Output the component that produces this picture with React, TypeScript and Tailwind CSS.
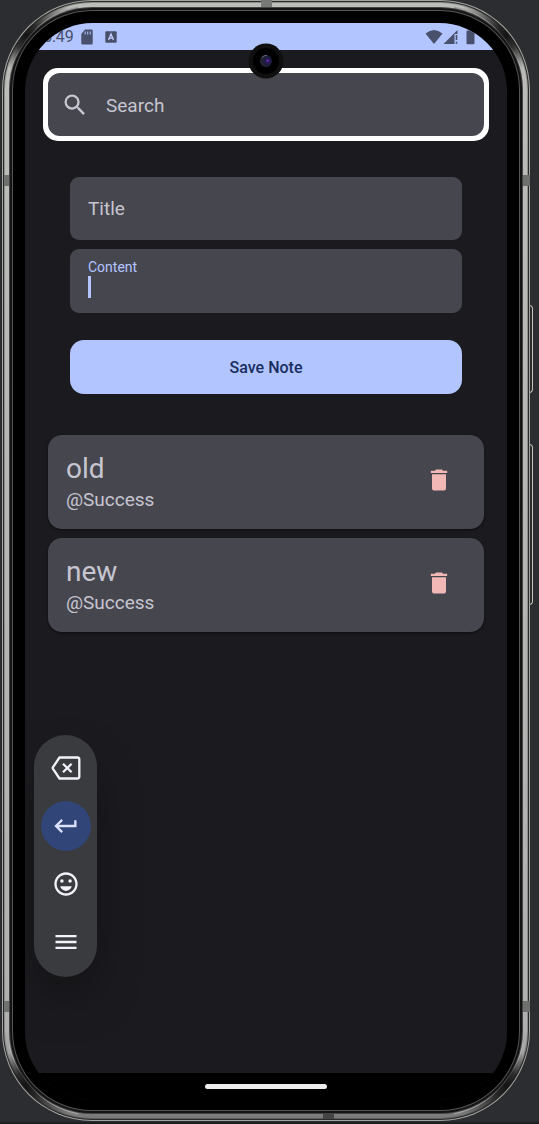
import { useState } from "react";
import {
  MdDelete,
  MdKeyboardReturn,
  MdMenu,
  MdOutlineEmojiEmotions,
  MdSearch,
} from "react-icons/md";

type Note = { id: number; title: string; content: string };

const initialNotes: Note[] = [
  { id: 1, title: "old", content: "@Success" },
  { id: 2, title: "new", content: "@Success" },
];

function CornerShade({ className }: { className: string }) {
  return (
    <svg className={className} width="92" height="92" viewBox="0 0 92 92" fill="none" aria-hidden="true">
      <path d="M7.400 67.900A85.500 85.500 0 0 1 67.900 7.400" stroke="url(#rim-shade)" strokeWidth="6" />
      <path d="M6.600 76A84.500 84.500 0 0 1 19 47.500Q12.500 62 9.500 76Z" fill="#b4b4b4" />
      <path d="M76 6.600A84.500 84.500 0 0 0 31 31.500Q48 16 76 9.500Z" fill="#a0a0a0" />
    </svg>
  );
}

function PhoneFrame() {
  return (
    <div aria-hidden="true">
      <svg className="absolute" width="0" height="0">
        <defs>
          <linearGradient id="rim-shade" gradientUnits="userSpaceOnUse" x1="7" y1="68" x2="68" y2="7">
            <stop offset="0" stopColor="#1a1a1a" stopOpacity="0" />
            <stop offset="0.25" stopColor="#1a1a1a" stopOpacity="0.85" />
            <stop offset="0.4" stopColor="#141414" />
            <stop offset="0.55" stopColor="#1a1a1a" stopOpacity="0.9" />
            <stop offset="0.75" stopColor="#1a1a1a" stopOpacity="0.5" />
            <stop offset="1" stopColor="#1a1a1a" stopOpacity="0" />
          </linearGradient>
        </defs>
      </svg>
      <span className="absolute top-[305px] -right-[3px] h-[88px] w-1 rounded-r-sm border border-[#c4c4bc] bg-[#2a2a2a]" />
      <span className="absolute top-[444px] -right-[3px] h-[161px] w-1 rounded-r-sm border border-[#c4c4bc] bg-[#2a2a2a]" />
      <span className="absolute inset-0 rounded-[90px] bg-[#a4a5a1]" />
      <span className="absolute inset-px rounded-[89px] bg-[#2a2a2a]" />
      <span className="absolute inset-0.5 rounded-[88px] bg-linear-to-b from-[#8f918d] from-0% via-[#8a8a8a] via-92% to-[#5c5c5c] to-100%" />
      <span className="absolute inset-[3px] rounded-[87px] bg-linear-to-b from-[#bcbeb9] from-0% via-[#b0b0b0] via-92% to-[#7a7a7a] to-100%" />
      <CornerShade className="absolute top-0 left-0" />
      <CornerShade className="absolute top-0 right-0 -scale-x-100" />
      <CornerShade className="absolute bottom-0 left-0 -scale-y-100" />
      <CornerShade className="absolute right-0 bottom-0 -scale-100" />
      <span className="absolute top-[175px] left-0.5 h-[11px] w-2 bg-[#6e716d]" />
      <span className="absolute top-[175px] right-0 h-[11px] w-2 bg-[#6e716d]" />
      <span className="absolute bottom-[109px] left-0.5 h-[11px] w-2 bg-[#6e716d]" />
      <span className="absolute right-0 bottom-[109px] h-[11px] w-2 bg-[#6e716d]" />
      <span className="absolute top-0 left-[259px] h-2 w-[11px] bg-[#777a76]" />
      <span className="absolute bottom-0.5 left-[321px] h-2 w-[11px] bg-[#444444]" />
      <span className="absolute inset-[7px] rounded-[83px] bg-[#444444]" />
      <span className="absolute inset-2 rounded-[82px] bg-[#141414]" />
      <span className="absolute inset-2.5 rounded-[80px] bg-[#555555]" />
      <span className="absolute inset-[11px] rounded-[79px] bg-black" />
    </div>
  );
}

function StatusBar() {
  return (
    <header className="flex h-[27px] items-center justify-between bg-[#b2c5ff] pr-8 pl-[18px] text-[#48506c]">
      <div className="flex items-center">
        <span className="w-[38px] text-base leading-none">5:49</span>
        <svg className="block" width="12" height="16" viewBox="0 0 12 16" aria-hidden="true">
          <path d="M4 0.5H10.5A1.2 1.2 0 0 1 11.7 1.7V14.3A1.2 1.2 0 0 1 10.5 15.5H1.5A1.2 1.2 0 0 1 .3 14.3V5Z" fill="currentColor" />
          <path d="M4.2 2.5v3M6.7 2.5v3M9.2 2.5v3" stroke="#b2c5ff" strokeWidth="1" />
        </svg>
        <svg className="ml-3 block" width="12" height="12" viewBox="0 0 12 12" aria-hidden="true">
          <rect x="0.3" y="0.3" width="11.4" height="11.4" rx="1" fill="currentColor" />
          <path d="M3.5 9 6 3 8.500 9M4.300 7.200H7.700" stroke="#c4d2ff" strokeWidth="1.300" fill="none" />
        </svg>
      </div>
      <div className="flex items-center">
        <svg className="block" width="18" height="16" viewBox="0 0 18 16" aria-hidden="true">
          <path d="M.5 4.500Q9-2.500 17.500 4.500L9 15Z" fill="currentColor" />
        </svg>
        <svg className="block" width="16" height="16" viewBox="0 0 16 16" aria-hidden="true">
          <path d="M.5 15 14.500 1V5H11.500V15Z" fill="currentColor" />
          <path d="M13.500 6v5M13.500 12.800v2" stroke="currentColor" strokeWidth="1.600" />
        </svg>
        <svg className="ml-[7px] block" width="9" height="16" viewBox="0 0 9 16" aria-hidden="true">
          <path d="M3 0H6V1.500H7.500A1 1 0 0 1 8.500 2.500V14.200A1 1 0 0 1 7.500 15.200H1.500A1 1 0 0 1 .5 14.200V2.500A1 1 0 0 1 1.500 1.500H3Z" fill="currentColor" />
        </svg>
      </div>
    </header>
  );
}

function Camera() {
  return (
    <svg className="absolute top-5 left-1/2 -translate-x-1/2" width="36" height="36" viewBox="0 0 36 36" aria-hidden="true">
      <defs>
        <radialGradient id="lens" cx="0.65" cy="0.5" r="0.6">
          <stop offset="0" stopColor="#4a1a80" />
          <stop offset="0.45" stopColor="#1c1a40" />
          <stop offset="1" stopColor="#23292e" />
        </radialGradient>
      </defs>
      <circle cx="18" cy="18" r="17.500" fill="#0f0f10" />
      <circle cx="18" cy="18" r="13" fill="#000000" />
      <circle cx="18" cy="18" r="6" fill="url(#lens)" />
      <circle cx="19.500" cy="17.500" r="0.8" fill="#8a3be0" />
      <path d="M14 14.500q2-2.500 5-2" stroke="#6d6a80" strokeWidth="1" fill="none" />
    </svg>
  );
}

function BackspaceIcon() {
  return (
    <svg width="30" height="28" viewBox="0 0 30 28" fill="none" stroke="currentColor" aria-hidden="true">
      <path
        d="M8.500 3.500H26.300A2 2 0 0 1 28.300 5.500V22.500A2 2 0 0 1 26.300 24.500H8.500L2 14.800Q1.500 14 2 13.200Z"
        strokeWidth="2.300"
        strokeLinejoin="round"
      />
      <path d="M12 9.700 20.600 18.300M20.600 9.700 12 18.300" strokeWidth="2.300" />
    </svg>
  );
}

function NoteCard({ note, onDelete }: { note: Note; onDelete: () => void }) {
  return (
    <li className="flex items-start justify-between rounded-[14px] bg-[#46464f] px-[18px] pt-[18px] pb-[15px] shadow-sm shadow-black/40">
      <div className="text-[#c6c5d0]">
        <h2 className="text-[28px] leading-8">{note.title}</h2>
        <p className="mt-px text-[19px] leading-7">{note.content}</p>
      </div>
      <button
        type="button"
        aria-label={`Delete ${note.title}`}
        onClick={onDelete}
        className="flex size-[54px] items-center justify-center text-[#f2b8b5]"
      >
        <MdDelete size={28} />
      </button>
    </li>
  );
}

function KeyToolbar() {
  const key = "flex size-[50px] items-center justify-center rounded-full text-[#f3f2fa]";
  return (
    <div className="absolute bottom-[123px] left-[9px] flex w-[63px] flex-col items-center gap-2 rounded-full bg-[#3a3b3f] pt-2 pb-2.5 shadow-2xl shadow-black/50">
      <button type="button" aria-label="Backspace" className={key}>
        <BackspaceIcon />
      </button>
      <button
        type="button"
        aria-label="Enter"
        className="flex size-[50px] items-center justify-center rounded-full bg-[#324578] text-[#dbe1ff]"
      >
        <MdKeyboardReturn size={28} />
      </button>
      <button type="button" aria-label="Emoji" className={key}>
        <MdOutlineEmojiEmotions size={28} />
      </button>
      <button type="button" aria-label="Menu" className={key}>
        <MdMenu size={28} />
      </button>
    </div>
  );
}

export default function App() {
  const [notes, setNotes] = useState<Note[]>(initialNotes);
  const [title, setTitle] = useState("");
  const [content, setContent] = useState("");

  const save = () => {
    if (!title && !content) return;
    setNotes([...notes, { id: Date.now(), title, content }]);
    setTitle("");
    setContent("");
  };

  return (
    <div className="flex min-h-screen flex-col border-b-2 border-[#1e1f22] bg-[#2b2d30] pr-[9px] pb-px pl-0.5 font-['Roboto',sans-serif]">
      <div className="relative flex flex-1 flex-col px-[23px] pt-[23px] pb-[21px]">
        <PhoneFrame />
        <div className="relative flex flex-1 flex-col overflow-hidden rounded-[68px] bg-[#1b1b1f]">
          <StatusBar />
          <main className="flex-1 pb-10">
            <div className="px-[18px] pt-[18px]">
              <div className="h-[73px] rounded-[15px] border-5 border-white bg-white">
                <label
                  htmlFor="search"
                  className="flex h-full w-full items-center gap-[17px] rounded-xl bg-[#46464f] pl-[13px] text-[#c6c5d0]"
                >
                  <MdSearch size={28} className="shrink-0" aria-label="Search" />
                  <input
                    id="search"
                    type="search"
                    placeholder="Search"
                    className="h-full w-full min-w-0 bg-transparent pt-0.5 text-[19px] outline-none placeholder:text-[#c6c5d0]"
                  />
                </label>
              </div>
            </div>

            <form
              className="flex flex-col px-[45px] pt-9"
              onSubmit={(e) => {
                e.preventDefault();
                save();
              }}
            >
              <input
                aria-label="Title"
                placeholder="Title"
                value={title}
                onChange={(e) => setTitle(e.target.value)}
                className="h-[63px] w-full rounded-[9px] bg-[#46464f] px-[18px] text-[19px] text-[#c6c5d0] outline-none placeholder:text-[#c6c5d0]"
              />
              <div className="mt-[9px] h-16 rounded-[9px] bg-[#46464f] px-[18px] pt-2.5">
                <label htmlFor="content" className="block text-sm leading-4 text-[#b2c5ff]">
                  Content
                </label>
                <div className="mt-px flex h-[22px] items-center">
                  {content === "" && <span className="h-full w-[3px] bg-[#b2c5ff]" />}
                  <input
                    id="content"
                    value={content}
                    onChange={(e) => setContent(e.target.value)}
                    className="w-full min-w-0 bg-transparent text-[19px] leading-none text-[#c6c5d0] outline-none"
                  />
                </div>
              </div>
              <button
                type="submit"
                className="mt-[27px] h-[54px] rounded-[14px] bg-[#b2c5ff] pt-0.5 text-base font-medium text-[#182e60]"
              >
                Save Note
              </button>
            </form>

            <ul className="flex flex-col gap-[9px] px-[23px] pt-[41px]">
              {notes.map((note) => (
                <NoteCard
                  key={note.id}
                  note={note}
                  onDelete={() => setNotes(notes.filter((n) => n.id !== note.id))}
                />
              ))}
            </ul>
          </main>
          <footer className="flex h-[27px] justify-center bg-black pt-[11px]">
            <span className="h-[5px] w-[122px] rounded-full bg-[#ececec]" />
          </footer>
          <Camera />
          <KeyToolbar />
        </div>
      </div>
    </div>
  );
}
